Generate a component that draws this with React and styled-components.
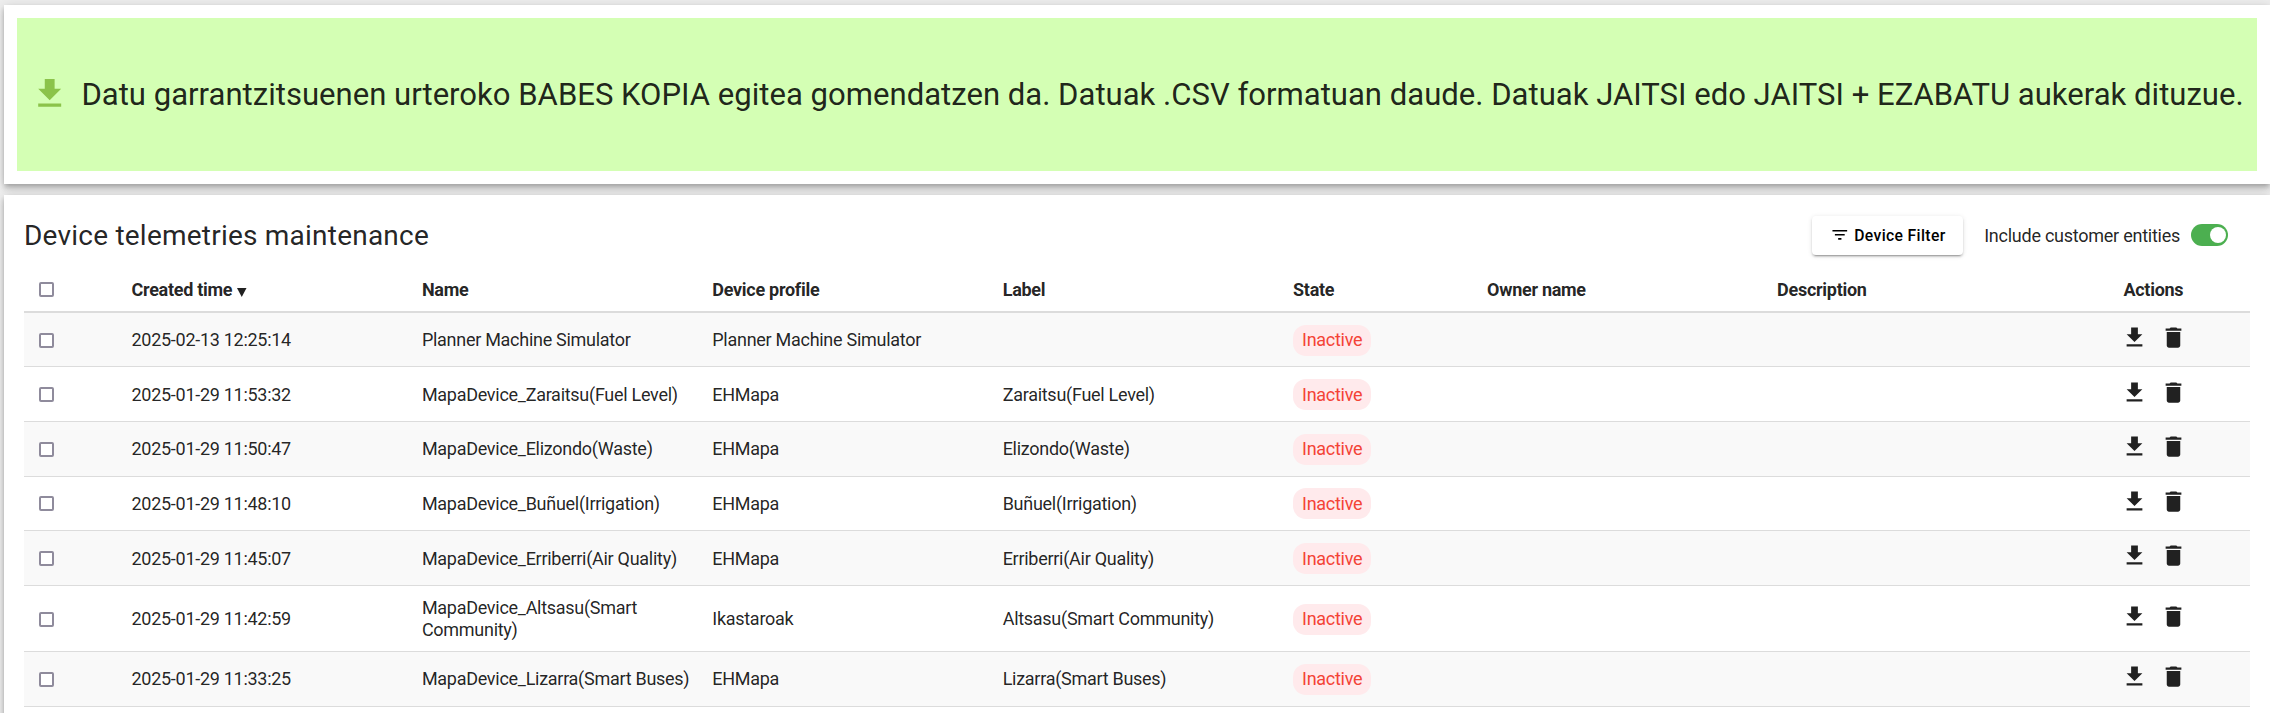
import React from "react";
import styled, { createGlobalStyle } from "styled-components";

const Global = createGlobalStyle`
  * { box-sizing: border-box; }
  html, body, #root { height: 100%; }
  body { margin: 0; background: #eee; overflow: hidden; font-family: Roboto, sans-serif; color: rgba(0,0,0,.87); }
`;

const Page = styled.main`
  height: 713px;
  padding: 5px 0 0 4px;
  display: flex;
  flex-direction: column;
  gap: 11px;
  overflow: hidden;
`;
const Card = styled.section`
  flex: none;
  background: #fff;
  box-shadow: 0 2px 4.5px -1px rgba(0,0,0,.2), 0 4.5px 5.7px rgba(0,0,0,.14), 0 1px 11.4px rgba(0,0,0,.12);
`;
const BannerCard = styled(Card)`
  height: 179px;
  padding: 13px;
`;
const Banner = styled.div`
  height: 153px;
  background: #d4ffb4;
  display: flex;
  align-items: center;
  padding: 0 0 1px 13px;
`;
const BannerText = styled.div`
  margin-left: 12px;
  font-size: 31.09px;
  white-space: nowrap;
`;
const Glyph = styled.svg`
  display: block;
  flex: none;
  width: ${(p) => p.$size}px;
  height: ${(p) => p.$size}px;
  fill: ${(p) => p.$color || "#212121"};
`;
const TableCard = styled(Card)`
  height: 640px;
  padding: 0 20px 0 20px;
`;
const Toolbar = styled.header`
  height: 80px;
  display: flex;
  align-items: center;
  padding-right: 22px;
`;
const Title = styled.h2`
  margin: 0;
  flex: 1;
  font-size: 28px;
  font-weight: 400;
  letter-spacing: 0.22px;
`;
const FilterButton = styled.button`
  width: 151px;
  height: 39px;
  display: flex;
  align-items: center;
  gap: 4.5px;
  padding: 0 0 0 18px;
  border: 0;
  border-radius: 4px;
  background: #fff;
  color: #000;
  font: 500 15.7px Roboto, sans-serif;
  letter-spacing: 0.36px;
  white-space: nowrap;
  box-shadow: 0 3px 1px -2px rgba(0,0,0,.2), 0 2px 2px rgba(0,0,0,.14), 0 1px 5px rgba(0,0,0,.12);
`;
const ToggleLabel = styled.span`
  margin: 0 11px 0 21px;
  font-size: 18px;
  letter-spacing: -0.25px;
`;
const Toggle = styled.span`
  width: 37px;
  height: 22px;
  border-radius: 11px;
  background: #4caf50;
  display: flex;
  align-items: center;
  justify-content: flex-end;
  padding-right: 2px;
`;
const Knob = styled.span`
  width: 16px;
  height: 16px;
  border-radius: 50%;
  background: #fff;
`;
const Row = styled.div`
  display: grid;
  grid-template-columns: 107.5px 290.4px 290.4px 290.4px 290.4px 194px 290px 346.4px 1fr;
  align-items: center;
  height: ${(p) => p.$height}px;
  padding: ${(p) => (p.$head ? "0 0 6px" : "1.2px 0 0")};
  background: ${(p) => (p.$shaded ? "#f9f9f9" : "#fff")};
  border-bottom: ${(p) => (p.$head ? 2 : 1)}px solid #dcdcdc;
  font-size: 18px;
  letter-spacing: -0.28px;
  font-weight: ${(p) => (p.$head ? 700 : 400)};
  line-height: 22px;
`;
const Cell = styled.div`
  padding-right: 12px;
`;
const Check = styled.span`
  display: block;
  width: 15px;
  height: 15px;
  margin-left: 15px;
  border: 2px solid #8f8b9c;
  border-radius: 2px;
  background: #fff;
`;
const Sort = styled.svg`
  width: 9.5px;
  height: 9px;
  margin-left: 5px;
  vertical-align: -1px;
  fill: #212121;
`;
const Badge = styled.span`
  display: inline-flex;
  align-items: center;
  height: 31px;
  padding: 0 9px;
  border-radius: 13px;
  background: #ffeaec;
  color: #f44336;
`;
const Actions = styled.div`
  display: flex;
  gap: 12.2px;
  margin-left: -2.8px;
  padding-bottom: 5.4px;
`;

const DOWNLOAD = "M19 9h-4V3H9v6H5l7 7 7-7zM5 18v2h14v-2H5z";
const TRASH = "M6 19c0 1.1.9 2 2 2h8c1.1 0 2-.9 2-2V7H6v12zM19 4h-3.5l-1-1h-5l-1 1H5v2h14V4z";
const FILTER = "M10 18h4v-2h-4v2zM3 6v2h18V6H3zm3 7h12v-2H6v2z";

const Icon = ({ d, size, color }) => (
  <Glyph viewBox="0 0 24 24" $size={size} $color={color}>
    <path d={d} />
  </Glyph>
);

const rows = [
  ["2025-02-13 12:25:14", "Planner Machine Simulator", "Planner Machine Simulator", ""],
  ["2025-01-29 11:53:32", "MapaDevice_Zaraitsu(Fuel Level)", "EHMapa", "Zaraitsu(Fuel Level)"],
  ["2025-01-29 11:50:47", "MapaDevice_Elizondo(Waste)", "EHMapa", "Elizondo(Waste)"],
  ["2025-01-29 11:48:10", "MapaDevice_Buñuel(Irrigation)", "EHMapa", "Buñuel(Irrigation)"],
  ["2025-01-29 11:45:07", "MapaDevice_Erriberri(Air Quality)", "EHMapa", "Erriberri(Air Quality)"],
  ["2025-01-29 11:42:59", "MapaDevice_Altsasu(Smart Community)", "Ikastaroak", "Altsasu(Smart Community)", 66.3],
  ["2025-01-29 11:33:25", "MapaDevice_Lizarra(Smart Buses)", "EHMapa", "Lizarra(Smart Buses)"],
];

export default function App() {
  return (
    <Page>
      <Global />
      <BannerCard>
        <Banner>
          <Icon d={DOWNLOAD} size={39.4} color="#8bc34a" />
          <BannerText>
            Datu garrantzitsuenen urteroko BABES KOPIA egitea gomendatzen da. Datuak .CSV formatuan daude. Datuak JAITSI edo JAITSI + EZABATU aukerak dituzue.
          </BannerText>
        </Banner>
      </BannerCard>
      <TableCard>
        <Toolbar>
          <Title>Device telemetries maintenance</Title>
          <FilterButton>
            <Icon d={FILTER} size={19.6} color="#000" />
            Device Filter
          </FilterButton>
          <ToggleLabel>Include customer entities</ToggleLabel>
          <Toggle>
            <Knob />
          </Toggle>
        </Toolbar>
        <Row $head $height={37.8}>
          <Check />
          <Cell>
            Created time
            <Sort viewBox="0 0 10 10" preserveAspectRatio="none">
              <path d="M0 0h10L5 10z" />
            </Sort>
          </Cell>
          <Cell>Name</Cell>
          <Cell>Device profile</Cell>
          <Cell>Label</Cell>
          <Cell>State</Cell>
          <Cell>Owner name</Cell>
          <Cell>Description</Cell>
          <Cell>Actions</Cell>
        </Row>
        {rows.map(([time, name, profile, label, height = 54.6], i) => (
          <Row key={time} $height={height} $shaded={i % 2 === 0}>
            <Check />
            <Cell>{time}</Cell>
            <Cell>{name}</Cell>
            <Cell>{profile}</Cell>
            <Cell>{label}</Cell>
            <Cell><Badge>Inactive</Badge></Cell>
            <Cell />
            <Cell />
            <Actions>
              <Icon d={DOWNLOAD} size={27} />
              <Icon d={TRASH} size={27} />
            </Actions>
          </Row>
        ))}
      </TableCard>
    </Page>
  );
}
